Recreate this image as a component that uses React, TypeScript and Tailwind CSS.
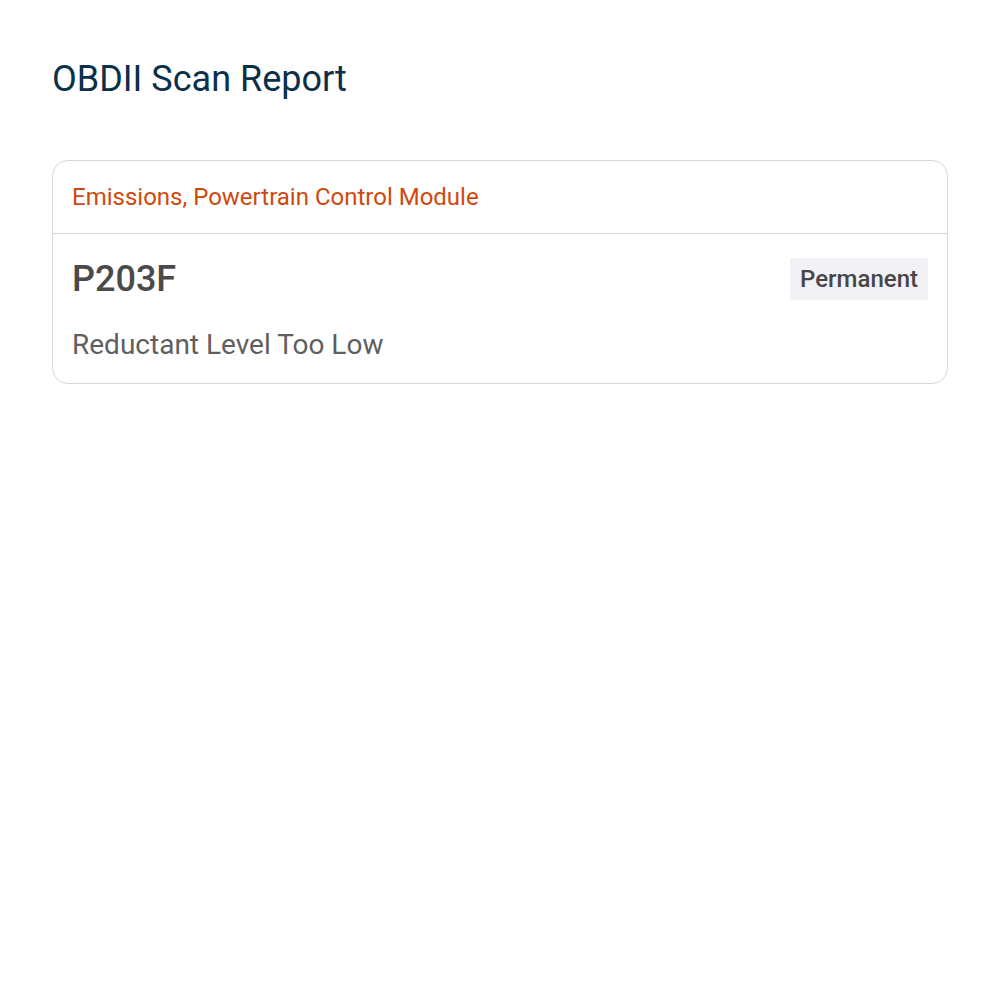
import React from 'react';

const CODES = [
  {
    system: 'Emissions, Powertrain Control Module',
    code: 'P203F',
    status: 'Permanent',
    description: 'Reductant Level Too Low',
  },
];

export default function App() {
  return (
    <div className="min-h-screen bg-white px-[52px] pt-[57px]" style={{ fontFamily: 'Roboto, "Noto Sans", sans-serif' }}>
      <h1 className="text-[36px] leading-[44px] text-[#0b3049]">OBDII Scan Report</h1>

      <div className="mt-[59px] flex flex-col gap-4">
        {CODES.map((item) => (
          <div key={item.code} className="rounded-2xl border border-[#d6d6da] bg-white">
            <div className="border-b border-[#d6d6da] px-[19px] py-[21px]">
              <div className="text-[24px] leading-[30px] text-[#d0490c]">{item.system}</div>
            </div>
            <div className="px-[19px] pt-6 pb-[21px]">
              <div className="flex items-start justify-between">
                <div className="text-[36px] leading-[42px] font-medium text-[#4a4a4a]">{item.code}</div>
                <span className="bg-[#f2f2f6] px-2.5 py-[6px] text-[24px] leading-[30px] font-medium text-[#474747]">
                  {item.status}
                </span>
              </div>
              <div className="mt-[28px] text-[28px] leading-[34px] text-[#5f5f5f]">{item.description}</div>
            </div>
          </div>
        ))}
      </div>
    </div>
  );
}
